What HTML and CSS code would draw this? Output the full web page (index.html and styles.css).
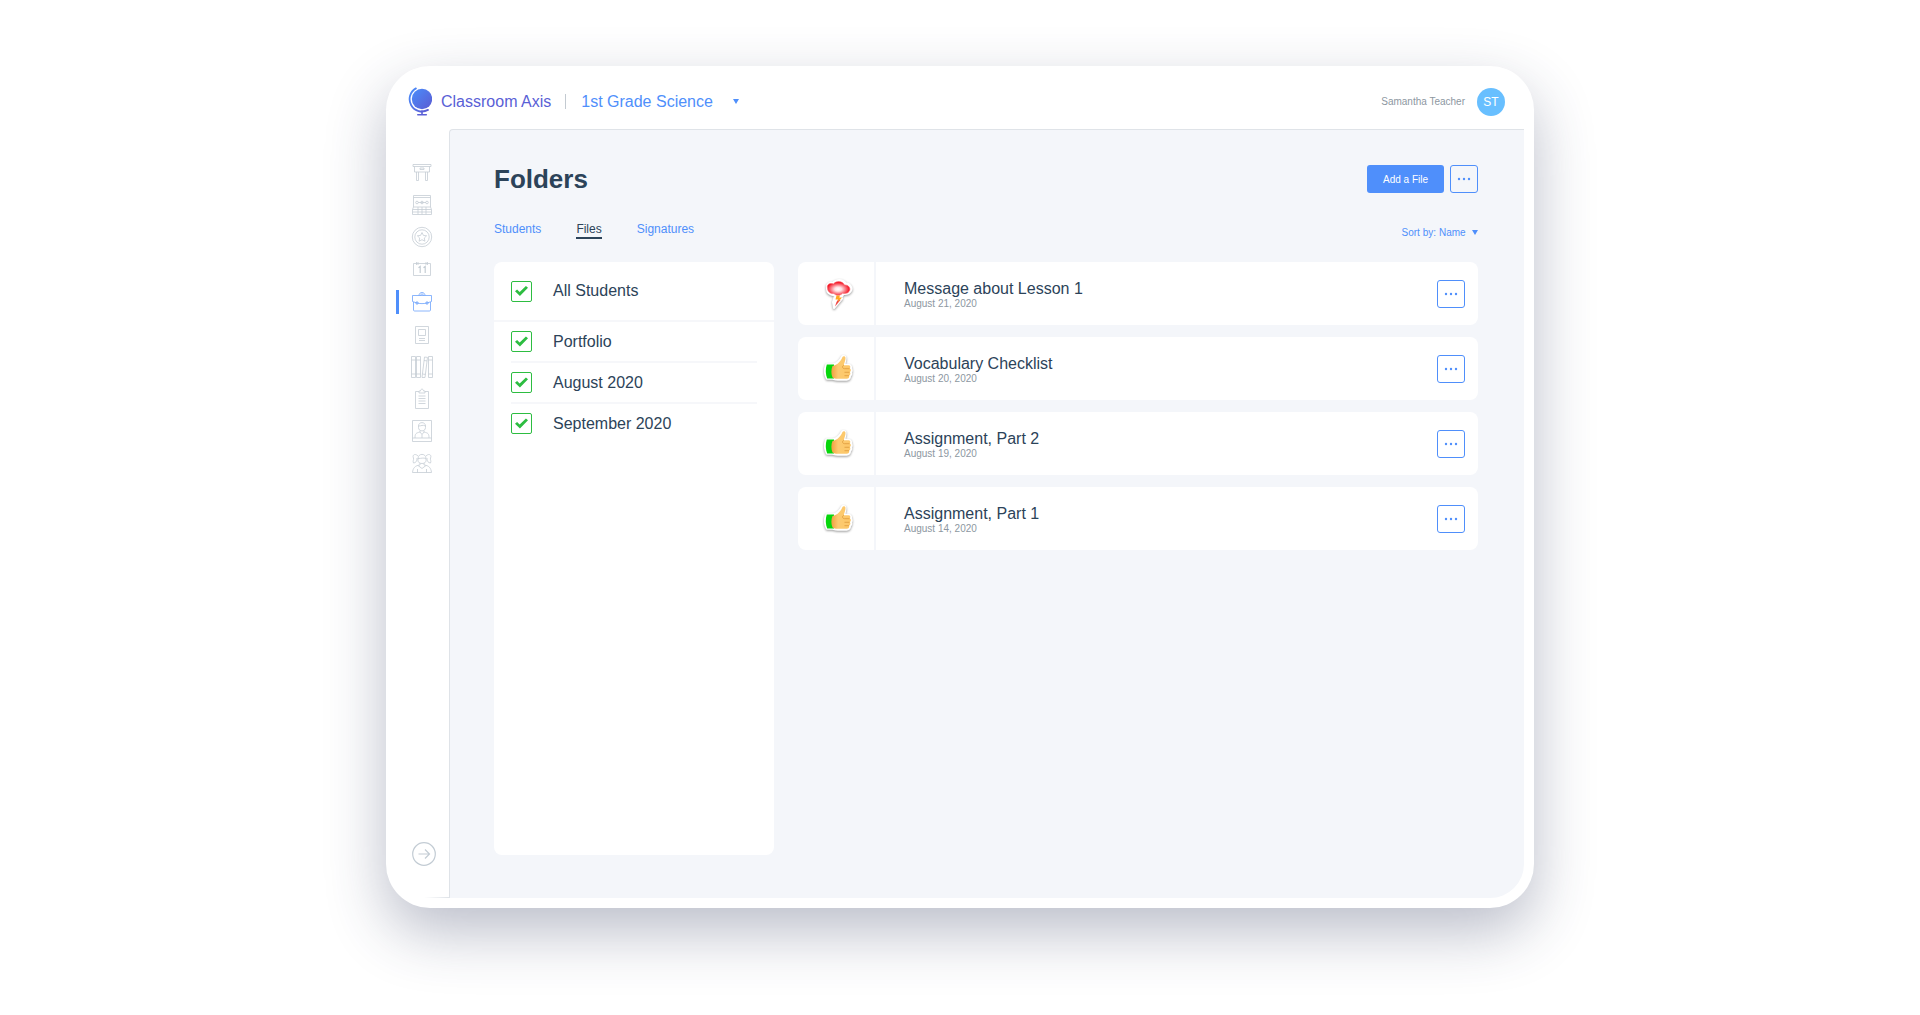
FILE: index.html
```html
<!DOCTYPE html>
<html lang="en">
<head>
    <meta charset="UTF-8">
    <meta name="viewport" content="width=device-width, initial-scale=1.0">
    <title>Classroom Axis - Folders</title>
    <link rel="stylesheet" href="styles.css">
</head>
<body>
    <!-- shared artwork -->
    <svg class="defs" width="0" height="0" aria-hidden="true">
        <defs>
            <linearGradient id="globe-fill" x1="0" y1="0" x2="1" y2="1">
                <stop offset="0" stop-color="#4a8dfb"/>
                <stop offset="1" stop-color="#5c5bd2"/>
            </linearGradient>
            <radialGradient id="cloud-fill" cx=".48" cy=".55" r=".5">
                <stop offset="0" stop-color="#fff"/>
                <stop offset=".3" stop-color="#ffe3e5"/>
                <stop offset="1" stop-color="#f3101f"/>
            </radialGradient>
            <linearGradient id="hand-fill" x1="0" y1="0" x2="1" y2="0">
                <stop offset="0" stop-color="#f0a040"/>
                <stop offset=".35" stop-color="#fcca70"/>
                <stop offset="1" stop-color="#fdc768"/>
            </linearGradient>
            <symbol id="dots" viewBox="0 0 14 4">
                <circle cx="2" cy="2" r="1.2"/><circle cx="7" cy="2" r="1.2"/><circle cx="12" cy="2" r="1.2"/>
            </symbol>
            <symbol id="caret" viewBox="0 0 6 5"><path d="M0 0h6L3 5z"/></symbol>
            <symbol id="thumb" viewBox="0 0 30 30">
                <path d="M2.500 10.500H9c4-1 7-3.500 9-7.500.8-1.500 3.300-1 3.300 1 0 2.500-1 5-1.300 7h4.500c2.200 0 2.700 2 2 3.300 1.200 1 1.200 3 .2 4 .7 1.500.2 3-1 3.500.3 2.200-1 3.700-3 3.700h-9c-2 0-3.500-.5-5-1H3c-2-4-2.500-9.500-.5-14z" fill="#fff" stroke="#fff" stroke-width="2.500" stroke-linejoin="round"/>
                <path d="M2.800 10.500H10v14H3.200c-1.700-4-1.900-9.500-.4-14z" fill="#06d60c"/>
                <path d="M8.500 12c5-1 8-4.500 10-9 .8-1.500 3-1 3 1 0 2.500-1.300 5-1.700 7.300h4.700c2 0 2.300 2 1.300 3 1.500 1 1.300 3 0 3.700 1 1.200.6 3-.6 3.500.3 2-.7 3.300-2.500 3.300H14c-2.500 0-4-.6-5.500-1.300-1.500-3.500-1.500-8 0-11.500z" fill="url(#hand-fill)"/>
                <path d="M20 11.300c-2 .3-2 3.300.5 3.400h5M25.500 18.300h-5M25 21.700h-4.500" fill="none" stroke="#dd9a3c" stroke-width=".8"/>
            </symbol>
            <symbol id="storm" viewBox="0 0 30 30">
                <path d="M3 9c-1-4 3-6.500 6-5 2.500-3.800 10-4.200 12.500.2 4 0 8 4.800 5 8.300-1.500 2.500-4 2.800-7 2.500l-2.500 4 1 .5-8 9.500-1-6 2-6.500C5 16 2.500 13 3 9z" fill="#fff" stroke="#fff" stroke-width="2" stroke-linejoin="round"/>
                <path d="M3.500 9c-1-3.500 2.500-5.500 6-4C12 1.500 18.500 1.800 20.500 6c4-.3 7 3.500 4.500 6.500-1.500 2.300-4.500 2-6.500 1.700-2.500 2.900-6.500 2.700-8.500.3-3.500.5-6.500-2-6.500-5.500z" fill="url(#cloud-fill)" stroke="#fb6a72" stroke-width=".6"/>
                <path d="M14.500 20l2 1-5.500 6.500 1.500-4.500z" fill="#ef4444"/>
                <path d="M12.500 16.500h3.500l-.8 2h2.800l-4 4.500.4-2.500h-2.900z" fill="#ffa81f"/>
            </symbol>
        </defs>
    </svg>

    <div class="app">
        <header class="topbar">
            <a class="brand" href="#">
                <svg width="24" height="29" viewBox="0 0 24 29" fill="none">
                    <circle cx="14" cy="12" r="10.200" fill="url(#globe-fill)"/>
                    <path d="M7.900 1.400A12.300 12.300 0 0 0 20 22.900" stroke="url(#globe-fill)" stroke-width="1.800" stroke-linecap="round"/>
                    <path d="M14 24v3.500M9.800 27.700h8.500" stroke="#5b60d6" stroke-width="1.600" stroke-linecap="round"/>
                </svg>
                Classroom Axis
            </a>
            <span class="divider"></span>
            <label class="dropdown class-picker">
                <select aria-label="Class"><option>1st Grade Science</option></select>
                <svg class="caret" width="6" height="5"><use href="#caret"/></svg>
            </label>
            <div class="user">
                <span>Samantha Teacher</span>
                <span class="avatar">ST</span>
            </div>
        </header>

        <div class="body">
            <nav class="sidebar">
                <ul>
                    <li><a href="#" aria-label="Desk"><svg viewBox="0 0 20 20">
                        <path d="M1 1.500h18v2H1zM2.500 3.500v5.500h15V3.500M8 5h4v1.500H8zM4.500 9v8.500h2V9M13.500 9v8.500h2V9"/></svg></a></li>
                    <li><a href="#" aria-label="Classroom"><svg viewBox="0 0 20 20">
                        <path d="M1.500 12V.5h17V12zM1.500 2.500h17M.5 14.500h19v5H.5zM1.500 12l-1 2.500M18.500 12l1 2.500M.5 17h19M6 12v7.500M10 12v7.500M14 12v7.500M6 7.500h8"/>
                        <circle cx="5" cy="7.500" r="1.300"/><circle cx="10" cy="7.500" r="1.300"/><circle cx="15" cy="7.500" r="1.300"/></svg></a></li>
                    <li><a href="#" aria-label="Rewards"><svg viewBox="0 0 20 20">
                        <circle cx="10" cy="10" r="9.700"/><circle cx="10" cy="10" r="7.200"/>
                        <path d="M10 5.500l1.400 2.900 3.200.4-2.300 2.200.6 3.200-2.900-1.500-2.900 1.500.6-3.200-2.300-2.200 3.200-.4z"/></svg></a></li>
                    <li><a href="#" aria-label="Calendar"><svg viewBox="0 0 20 20">
                        <path d="M1.500 4.500h17v12h-17zM4.500 3v3M6 3v3M14 3v3M15.500 3v3"/><path d="M6.500 8.700l1.700-1.200v6.500M11.500 8.700l1.700-1.200v6.500" stroke-width="1.200"/></svg></a></li>
                    <li class="active"><a href="#" aria-label="Folders" aria-current="page"><svg viewBox="0 0 20 20">
                        <path d="M.5 3.500h19v6l-4.500 1.500c-2 .8-8 .8-10 0L.5 9.500zM1.500 10v8c0 .6.4 1 1 1h15c.6 0 1-.4 1-1v-8M7 3.500c0-4 6-4 6 0M8.500 3.500c0-2 3-2 3 0M4 10h2v2H4zM14 10h2v2h-2z"/></svg></a></li>
                    <li><a href="#" aria-label="Reports"><svg viewBox="0 0 20 20">
                        <path d="M3.500 1.500h13v17h-13zM6.500 4.500h7v6h-7zM7 13.500h6M7 15.500h6"/></svg></a></li>
                    <li><a href="#" aria-label="Library"><svg viewBox="0 0 20 20">
                        <path d="M-.5-.5h4v21h-4zM4.500-.5h4v21h-4zM10 20.500L12.500 0l3 .4-2.500 20.100zM16.500-.5h4v21h-4zM-.5 3h9M-.5 17h9M16.500 3h4M16.500 17h4M12 3.500l3 .4M10.500 17l3 .4"/></svg></a></li>
                    <li><a href="#" aria-label="Assignments"><svg viewBox="0 0 20 20">
                        <path d="M7 2.500H3.500v17h13v-17H13M7 4V2h1.500c0-2.500 3-2.500 3 0H13v2zM6.500 7h7M6.500 9.500h7M6.500 12h7M6.500 14.500h7"/></svg></a></li>
                    <li><a href="#" aria-label="Teachers"><svg viewBox="0 0 20 20">
                        <path d="M.5-.5h19v21H.5zM.5 17h19M6.500 5c0-4.500 7-4.500 7 0v1.500c0 4.500-7 4.500-7 0zM6.500 5c3 0 4-1.500 7 0M8 9.500V11c-4 1-5 1.500-5 6M12 9.500V11c4 1 5 1.500 5 6M8 11l2 2.500 2-2.500M10 13.500V17"/></svg></a></li>
                    <li><a href="#" aria-label="Students"><svg viewBox="0 0 20 20">
                        <path d="M6 5.500C6 0 14 0 14 5.500v2c0 4-8 4-8 0zM6 5.500c3.500 0 5-1 8 0M6 3C3 0 0 2 1.500 5 2 7 .5 8 1.500 10 3.500 10 5.500 8 5 5M14 3c3-3 6-1 4.500 2-.5 2 1 3 0 5-2 0-4-2-3.500-5M8 10v2c-5 .5-7 3-7.500 7.500h19C19 15 17 12.500 12 12v-2M6 12.500l4 3 4-3M5.500 16v3.500M14.500 16v3.500"/></svg></a></li>
                </ul>
                <button class="expand" type="button" aria-label="Expand menu">
                    <svg viewBox="0 0 24 24"><circle cx="12" cy="12" r="11.300"/><path d="M6.500 12h11M13 7.500l4.500 4.500-4.500 4.500"/></svg>
                </button>
            </nav>

            <main class="content">
                <div class="title-row">
                    <h1>Folders</h1>
                    <div class="actions">
                        <button class="btn-primary" type="button">Add a File</button>
                        <button class="btn-more" type="button" aria-label="More"><svg><use href="#dots"/></svg></button>
                    </div>
                </div>

                <div class="tab-row">
                    <div class="tabs">
                        <a href="#">Students</a>
                        <a class="current" href="#">Files</a>
                        <a href="#">Signatures</a>
                    </div>
                    <div class="sort">
                        <label for="sort">Sort by:</label>
                        <div class="dropdown">
                            <select id="sort"><option>Name</option></select>
                            <svg class="caret" width="6" height="5"><use href="#caret"/></svg>
                        </div>
                    </div>
                </div>

                <div class="panels">
                    <div class="filters">
                        <label class="all"><input type="checkbox" checked>All Students</label>
                        <div class="filter-list">
                            <label><input type="checkbox" checked>Portfolio</label>
                            <label><input type="checkbox" checked>August 2020</label>
                            <label><input type="checkbox" checked>September 2020</label>
                        </div>
                    </div>

                    <ul class="files">
                        <li>
                            <div class="sticker"><svg><use href="#storm"/></svg></div>
                            <div class="info"><h2>Message about Lesson 1</h2><p>August 21, 2020</p></div>
                            <button class="btn-more" type="button" aria-label="More"><svg><use href="#dots"/></svg></button>
                        </li>
                        <li>
                            <div class="sticker"><svg><use href="#thumb"/></svg></div>
                            <div class="info"><h2>Vocabulary Checklist</h2><p>August 20, 2020</p></div>
                            <button class="btn-more" type="button" aria-label="More"><svg><use href="#dots"/></svg></button>
                        </li>
                        <li>
                            <div class="sticker"><svg><use href="#thumb"/></svg></div>
                            <div class="info"><h2>Assignment, Part 2</h2><p>August 19, 2020</p></div>
                            <button class="btn-more" type="button" aria-label="More"><svg><use href="#dots"/></svg></button>
                        </li>
                        <li>
                            <div class="sticker"><svg><use href="#thumb"/></svg></div>
                            <div class="info"><h2>Assignment, Part 1</h2><p>August 14, 2020</p></div>
                            <button class="btn-more" type="button" aria-label="More"><svg><use href="#dots"/></svg></button>
                        </li>
                    </ul>
                </div>
            </main>
        </div>
    </div>
</body>
</html>
```
FILE: styles.css
```css
*{
    margin: 0;
    padding: 0;
    box-sizing: border-box;
}
body{
    display: flex;
    justify-content: center;
    min-height: 100vh;
    padding: 66px 40px 107px;
    background: #fff;
    color: #2c4359;
    font-family: "Liberation Sans", Arial, sans-serif;
    font-size: 16px;
}
a{
    color: inherit;
    text-decoration: none;
}
ul{
    list-style: none;
}
button, select, input{
    font: inherit;
    color: inherit;
    cursor: pointer;
}
.defs{
    position: absolute;
}
.app{
    display: flex;
    flex-direction: column;
    width: 100%;
    max-width: 1148px;
    background: #fff;
    border-radius: 44px;
    box-shadow: 0 24px 60px rgba(45, 52, 90, 0.32);
}

/* top bar */
.topbar{
    display: flex;
    align-items: center;
    padding: 21px 29px 13px 22px;
}
.brand{
    display: flex;
    align-items: center;
    gap: 9px;
    color: #5a5fd6;
}
.divider{
    width: 1px;
    height: 15px;
    margin: 0 15px 0 14px;
    background: #c3cad1;
}
.dropdown{
    display: flex;
    align-items: center;
    gap: 6px;
    color: #4f8ffb;
}
.dropdown select{
    appearance: none;
    border: none;
    background: none;
}
.class-picker{
    gap: 20px;
}
.caret{
    fill: #4f8ffb;
}
.user{
    display: flex;
    align-items: center;
    gap: 12px;
    margin-left: auto;
    font-size: 10px;
    color: #8d97a1;
}
.avatar{
    width: 28px;
    height: 28px;
    border-radius: 50%;
    background: #68bfff;
    color: #fff;
    font-size: 12px;
    line-height: 28px;
    text-align: center;
}

/* side menu */
.body{
    display: flex;
    flex: 1;
    padding: 0 10px 10px 0;
}
.sidebar{
    display: flex;
    flex-direction: column;
    justify-content: space-between;
    width: 63px;
    padding: 34px 0 32px 26px;
    background: linear-gradient(to right, transparent 38px, #dfe3e8) bottom / 100% 1px no-repeat;
}
.sidebar ul{
    display: flex;
    flex-direction: column;
    gap: 12px;
}
.sidebar li{
    position: relative;
    height: 20px;
}
.sidebar svg{
    display: block;
    width: 20px;
    height: 20px;
    overflow: visible;
    fill: none;
    stroke: #c5cdd4;
    stroke-width: 0.8;
}
.sidebar .active{
    height: 22px;
    padding-top: 1px;
}
.sidebar .active svg{
    stroke: #6ea3fb;
}
.sidebar .active::before{
    content: "";
    position: absolute;
    top: -1px;
    left: -16px;
    width: 3px;
    height: 24px;
    background: #4f8ffb;
}
.expand{
    width: 24px;
    height: 24px;
    border: none;
    background: none;
}
.expand svg{
    width: 24px;
    height: 24px;
    stroke: #c3ccd4;
    stroke-width: 1.2;
}

/* content */
.content{
    display: flex;
    flex-direction: column;
    flex: 1;
    padding: 35px 46px 43px 44px;
    background: #f4f6fa;
    border: solid #dfe3e8;
    border-width: 1px 0 0 1px;
    border-radius: 4px 0 34px 0;
}
.title-row, .tab-row{
    display: flex;
    align-items: center;
    justify-content: space-between;
}
h1{
    font-size: 26px;
    line-height: 26px;
}
.actions{
    display: flex;
    gap: 6px;
}
.btn-primary{
    height: 28px;
    padding: 0 16px;
    border: none;
    border-radius: 3px;
    background: #4f8ffb;
    color: #fff;
    font-size: 10px;
}
.btn-more{
    display: flex;
    align-items: center;
    justify-content: center;
    width: 28px;
    height: 28px;
    border: 1px solid #4f8ffb;
    border-radius: 3px;
    background: none;
}
.btn-more svg{
    width: 14px;
    height: 4px;
    fill: #4f8ffb;
}
.tab-row{
    margin: 29px 0 23px;
}
.tabs{
    display: flex;
    gap: 35px;
    font-size: 12px;
    line-height: 15px;
    color: #4f8ffb;
}
.tabs a{
    border-bottom: 2px solid transparent;
}
.tabs .current{
    color: #2c4359;
    border-color: #2c4359;
}
.sort{
    display: flex;
    align-items: center;
    gap: 3px;
    padding-top: 3px;
    font-size: 10px;
    color: #4f8ffb;
}
.panels{
    display: flex;
    flex: 1;
    gap: 24px;
}
.filters{
    width: 280px;
    background: #fff;
    border-radius: 8px;
}
.filters label{
    display: flex;
    align-items: center;
    gap: 21px;
    height: 41px;
    border-bottom: 2px solid #f6f7fa;
}
.filters .all{
    height: 60px;
    padding: 0 17px;
}
.filter-list{
    padding: 0 17px;
}
.filter-list label:last-child{
    border-color: transparent;
}
.filters input{
    appearance: none;
    display: grid;
    place-items: center;
    width: 21px;
    height: 21px;
    border: 1px solid #2dbd41;
    border-radius: 2px;
}
.filters input:checked::before{
    content: "";
    width: 13px;
    height: 11px;
    background: #2dbd41;
    clip-path: polygon(0 52%, 16% 36%, 36% 58%, 84% 4%, 100% 20%, 38% 96%);
}
.files{
    display: flex;
    flex-direction: column;
    flex: 1;
    gap: 12px;
}
.files li{
    display: flex;
    align-items: center;
    height: 63px;
    padding-right: 13px;
    background: #fff;
    border-radius: 8px;
}
.sticker{
    display: flex;
    align-items: center;
    justify-content: center;
    align-self: stretch;
    width: 78px;
    padding-left: 6px;
    border-right: 2px solid #f4f6fa;
}
.sticker svg{
    width: 30px;
    height: 30px;
    filter: drop-shadow(0 1px 1px rgba(0, 0, 0, 0.4));
}
.info{
    flex: 1;
    padding: 2px 0 0 28px;
}
.info h2{
    font-size: 16px;
    font-weight: normal;
    line-height: 18px;
}
.info p{
    font-size: 10px;
    line-height: 12px;
    color: #8d97a1;
}
```
